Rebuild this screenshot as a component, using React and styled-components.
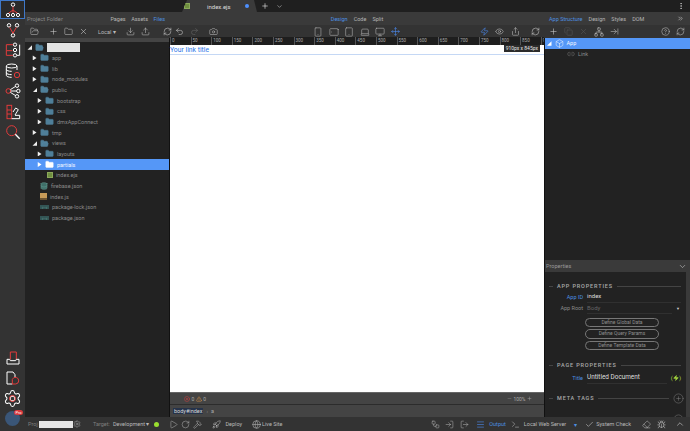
import styled, { createGlobalStyle } from "styled-components";
import {
  Plus, X, Upload, Download, RefreshCw, Undo2, Redo2, Camera, Smartphone, Tablet, Laptop,
  Monitor, Move, Zap, Eye, Share, Copy, Network, ArrowRightToLine, CircleHelp, ChevronDown,
  ChevronUp, ChevronsRight, EllipsisVertical, FolderOpen, Folder, Box, Link2, Settings,
  Play, RotateCw, Hammer, Rocket, Globe, Check, Eraser, Bug, Menu, Terminal, LogIn, LogOut,
  XCircle, TriangleAlert, CirclePlus, Minus, Workflow, Database,
} from "lucide-react";

const GlobalStyle = createGlobalStyle`
  html, body { margin: 0; padding: 0; background: #222; overflow: hidden; }
  * { box-sizing: border-box; }
`;

const rulerMarks = [0, 50, 100, 150, 200, 250, 300, 350, 400, 450, 500, 550, 600, 650, 700, 750, 800, 850, 900];

const treeItems = [
  { name: "app", depth: 1, arrow: "closed", icon: "folder" },
  { name: "lib", depth: 1, arrow: "closed", icon: "folder" },
  { name: "node_modules", depth: 1, arrow: "closed", icon: "folder" },
  { name: "public", depth: 1, arrow: "open", icon: "open" },
  { name: "bootstrap", depth: 2, arrow: "closed", icon: "folder" },
  { name: "css", depth: 2, arrow: "closed", icon: "folder" },
  { name: "dmxAppConnect", depth: 2, arrow: "closed", icon: "folder" },
  { name: "tmp", depth: 1, arrow: "closed", icon: "folder" },
  { name: "views", depth: 1, arrow: "open", icon: "open" },
  { name: "layouts", depth: 2, arrow: "closed", icon: "folder" },
  { name: "partials", depth: 2, arrow: "closed", icon: "folder", selected: true },
  { name: "index.ejs", depth: 2, icon: "ejs" },
  { name: "firebase.json", depth: 1, icon: "db" },
  { name: "index.js", depth: 1, icon: "js" },
  { name: "package-lock.json", depth: 1, icon: "json" },
  { name: "package.json", depth: 1, icon: "json" },
];

const App = () => {
  return (
    <>
      <GlobalStyle />
      <Shell>
        <Rail>
          <RailGroup>
            <RailItem $active>
              <RailIcon>
                <circle cx="12" cy="4" r="2.6" stroke="#fff" />
                <path d="M12 7v5M12 12L5 17M12 12v5M12 12l7 5" stroke="#e23b3b" />
                <circle cx="4.5" cy="19.5" r="2.4" stroke="#fff" />
                <circle cx="12" cy="19.5" r="2.4" stroke="#fff" />
                <circle cx="19.5" cy="19.5" r="2.4" stroke="#fff" />
              </RailIcon>
            </RailItem>
            <RailItem>
              <RailIcon>
                <circle cx="6" cy="5" r="2.6" stroke="#fff" />
                <circle cx="18" cy="5" r="2.6" stroke="#fff" />
                <circle cx="12" cy="20" r="2.6" stroke="#fff" />
                <path d="M7 8l5 9M17 8l-5 9" stroke="#e23b3b" />
              </RailIcon>
            </RailItem>
            <RailItem>
              <RailIcon>
                <circle cx="15" cy="4" r="2.5" stroke="#fff" />
                <circle cx="15" cy="12" r="2.5" stroke="#fff" />
                <circle cx="15" cy="20" r="2.5" stroke="#fff" />
                <path d="M22 4v16h-4" stroke="#fff" />
                <path d="M12 4H2v9h9M2 13v7h10" stroke="#e23b3b" />
              </RailIcon>
            </RailItem>
            <RailItem>
              <RailIcon>
                <ellipse cx="10" cy="4.5" rx="8" ry="3" stroke="#fff" />
                <path d="M2 4.5v14c0 1.8 3.5 3 8 3M18 4.5v6M2 9.5c0 1.8 3.5 3 8 3M2 14.5c0 1.8 3.5 3 8 3" stroke="#fff" />
                <circle cx="18" cy="18" r="4" stroke="#e23b3b" />
              </RailIcon>
            </RailItem>
            <RailItem>
              <RailIcon>
                <circle cx="5" cy="12" r="3.5" stroke="#e23b3b" />
                <circle cx="18" cy="4" r="2.6" stroke="#fff" />
                <circle cx="20" cy="12" r="2.6" stroke="#fff" />
                <circle cx="18" cy="20" r="2.6" stroke="#fff" />
                <path d="M8 10l8-5M8.5 12h9M8 14l8 5" stroke="#fff" />
              </RailIcon>
            </RailItem>
            <RailItem>
              <RailIcon>
                <rect x="3" y="2" width="7" height="20" stroke="#e23b3b" />
                <path d="M3 9h7M3 15h7" stroke="#e23b3b" />
                <path d="M12 12l4-6 4 2.5-5 8M10 22h12v-5h-7" stroke="#fff" />
              </RailIcon>
            </RailItem>
            <RailItem>
              <RailIcon>
                <circle cx="10" cy="10" r="7.5" stroke="#e23b3b" />
                <path d="M15.5 15.5L22 22" stroke="#fff" strokeWidth="2" />
              </RailIcon>
            </RailItem>
          </RailGroup>
          <RailGroup>
            <RailItem>
              <RailIcon>
                <path d="M8 14V3h9v11" stroke="#e23b3b" />
                <path d="M3 14v7h18v-7h-4l-1 2H8l-1-2z" stroke="#fff" />
              </RailIcon>
            </RailItem>
            <RailItem>
              <RailIcon>
                <path d="M3 21V3h9l3 4v4" stroke="#fff" />
                <path d="M3 21h8" stroke="#fff" />
                <path d="M11 14a5 5 0 1 1 5 7h-5z" stroke="#e23b3b" />
              </RailIcon>
            </RailItem>
            <RailItem>
              <SettingsWrap>
                <Settings size={19} color="#fff" strokeWidth={1.3} />
                <GearDot />
              </SettingsWrap>
            </RailItem>
          </RailGroup>
          <Avatar>
            <ProBadge>Pro</ProBadge>
          </Avatar>
        </Rail>

        <Main>
          <TabStrip>
            <FileTab>
              <EjsIcon />
              <TabName>index.ejs</TabName>
              <TabDot />
            </FileTab>
            <Plus size={8} color="#ddd" strokeWidth={2} />
            <ChevronDown size={7} color="#bbb" strokeWidth={2} />
            <TabSpacer />
            <EllipsisVertical size={8} color="#ccc" />
          </TabStrip>

          <HeaderStrip>
            <HeaderLeft>
              <PanelTitle>Project Folder</PanelTitle>
              <HeaderTabs>
                <HeaderTab>Pages</HeaderTab>
                <HeaderTab>Assets</HeaderTab>
                <HeaderTab $active>Files</HeaderTab>
              </HeaderTabs>
            </HeaderLeft>
            <HeaderCenter>
              <HeaderTab $active>Design</HeaderTab>
              <HeaderTab>Code</HeaderTab>
              <HeaderTab>Split</HeaderTab>
            </HeaderCenter>
            <HeaderRight>
              <HeaderTab $active>App Structure</HeaderTab>
              <HeaderTab>Design</HeaderTab>
              <HeaderTab>Styles</HeaderTab>
              <HeaderTab>DOM</HeaderTab>
              <TabSpacer />
              <ChevronsRight size={7} color="#ccc" />
            </HeaderRight>
          </HeaderStrip>

          <ToolStrip>
            <FileTools>
              <FolderOpen size={9} color="#bbb" strokeWidth={1.5} />
              <Plus size={9} color="#ccc" strokeWidth={1.5} />
              <Folder size={9} color="#bbb" strokeWidth={1.5} />
              <X size={9} color="#ccc" strokeWidth={1.5} />
              <LocalPicker>Local ▾</LocalPicker>
              <Download size={9} color="#bbb" strokeWidth={1.5} />
              <Upload size={9} color="#bbb" strokeWidth={1.5} />
            </FileTools>
            <HistoryTools>
              <RefreshCw size={9} color="#ccc" strokeWidth={1.5} />
              <Undo2 size={9} color="#ccc" strokeWidth={1.5} />
              <Redo2 size={9} color="#666" strokeWidth={1.5} />
              <Camera size={9} color="#bbb" strokeWidth={1.5} />
            </HistoryTools>
            <DeviceTools>
              <Smartphone size={10} color="#bbb" strokeWidth={1.3} />
              <Tablet size={10} color="#bbb" strokeWidth={1.3} style={{ transform: "rotate(90deg)" }} />
              <Tablet size={10} color="#bbb" strokeWidth={1.3} />
              <Laptop size={10} color="#bbb" strokeWidth={1.3} />
              <Monitor size={10} color="#bbb" strokeWidth={1.3} />
              <Move size={9} color="#4d90fe" strokeWidth={1.5} />
            </DeviceTools>
            <ViewTools>
              <Zap size={9} color="#4d90fe" strokeWidth={1.5} />
              <Eye size={9} color="#bbb" strokeWidth={1.5} />
              <Share size={9} color="#bbb" strokeWidth={1.5} />
              <RefreshCw size={9} color="#ccc" strokeWidth={1.5} />
            </ViewTools>
            <StructureTools>
              <Plus size={9} color="#ccc" strokeWidth={1.5} />
              <Copy size={9} color="#555" strokeWidth={1.5} />
              <X size={9} color="#555" strokeWidth={1.5} />
              <Network size={10} color="#bbb" strokeWidth={1.5} />
              <ArrowRightToLine size={9} color="#bbb" strokeWidth={1.5} />
              <TabSpacer />
              <CircleHelp size={9} color="#bbb" strokeWidth={1.5} />
              <RefreshCw size={9} color="#bbb" strokeWidth={1.5} />
            </StructureTools>
          </ToolStrip>

          <Workspace>
            <FilePanel>
              <PanelScroll />
              <TreeRow>
                <Arrow $kind="open" />
                <FolderOpen size={9} color="#5f8da8" fill="#4f7f99" strokeWidth={1} />
                <RedactedName />
              </TreeRow>
              {treeItems.map((item) => (
                <TreeRow key={item.name} $depth={item.depth} $selected={item.selected}>
                  <Arrow $kind={item.arrow} $selected={item.selected} />
                  <TreeIcon item={item} />
                  <TreeName $selected={item.selected}>{item.name}</TreeName>
                </TreeRow>
              ))}
            </FilePanel>

            <CanvasColumn>
              <Ruler>
                {rulerMarks.map((mark) => (
                  <RulerMark key={mark}>{mark}</RulerMark>
                ))}
              </Ruler>
              <Page>
                <PageLink>Your link title</PageLink>
                <SizeBadge>910px x 845px</SizeBadge>
              </Page>
              <StatusRow>
                <XCircle size={6} color="#d04040" strokeWidth={2} />
                <StatusCount>0</StatusCount>
                <TriangleAlert size={6} color="#d8934a" strokeWidth={2} />
                <StatusCount>0</StatusCount>
                <TabSpacer />
                <Minus size={5} color="#888" />
                <StatusCount>100%</StatusCount>
                <Plus size={5} color="#aaa" />
              </StatusRow>
              <CrumbRow>
                <Crumb>body#index</Crumb>
                <CrumbSep>›</CrumbSep>
                <CrumbPlain>a</CrumbPlain>
              </CrumbRow>
            </CanvasColumn>

            <SidePanel>
              <StructureTree>
                <StructureRow $selected>
                  <Arrow $kind="open" $selected />
                  <Box size={9} color="#fff" strokeWidth={1.3} />
                  <TreeName $selected>App</TreeName>
                </StructureRow>
                <StructureRow $child>
                  <Link2 size={8} color="#777" strokeWidth={1.5} />
                  <TreeName>Link</TreeName>
                </StructureRow>
              </StructureTree>
              <PropsHeader>
                <span>Properties</span>
                <ChevronDown size={9} color="#ccc" strokeWidth={1.5} />
              </PropsHeader>
              <PropsBody>
                <PropsContent>
                  <SectionTitle>APP PROPERTIES</SectionTitle>
                  <PropRow>
                    <PropLabel $blue>App ID</PropLabel>
                    <PropValue>index</PropValue>
                  </PropRow>
                  <PropRow>
                    <PropLabel>App Root</PropLabel>
                    <PropValue $muted>Body</PropValue>
                    <SelectCaret>▼</SelectCaret>
                  </PropRow>
                  <PillStack>
                    <Pill>Define Global Data</Pill>
                    <Pill>Define Query Params</Pill>
                    <Pill>Define Template Data</Pill>
                  </PillStack>
                  <SectionTitle $top={10}>PAGE PROPERTIES</SectionTitle>
                  <PropRow $top={2}>
                    <PropLabel $blue>Title</PropLabel>
                    <PropValue $large>Untitled Document</PropValue>
                    <BoltTag>
                      (<Zap size={6} color="#a5d63f" fill="#a5d63f" />)
                    </BoltTag>
                  </PropRow>
                  <SectionTitle $top={9.5} $plus>
                    META TAGS
                    <CirclePlus size={11} color="#888" strokeWidth={1} />
                  </SectionTitle>
                  <SectionTitle $top={11} $plus>
                    DYNAMIC ATTRIBUTES
                    <CirclePlus size={11} color="#888" strokeWidth={1} />
                  </SectionTitle>
                </PropsContent>
                <PropsScrollbar />
              </PropsBody>
            </SidePanel>
          </Workspace>

          <BottomBar>
            <ProjectSlot>
              <BarText>Proj</BarText>
              <RedactedProject />
              <Settings size={8} color="#aaa" strokeWidth={1.5} />
            </ProjectSlot>
            <TargetSlot>
              <BarText>Target:</BarText>
              <BarText $bright>Development ▾</BarText>
              <GreenDot />
              <Play size={9} color="#bbb" strokeWidth={1.3} />
              <RotateCw size={9} color="#bbb" strokeWidth={1.3} />
              <Hammer size={9} color="#bbb" strokeWidth={1.3} />
            </TargetSlot>
            <BarButton $gap={5}>
              <Rocket size={9} color="#ccc" strokeWidth={1.3} />
              <BarText $bright>Deploy</BarText>
            </BarButton>
            <BarButton $gap={1.5}>
              <Globe size={9} color="#ccc" strokeWidth={1.3} />
              <BarText $bright>Live Site</BarText>
            </BarButton>
            <TabSpacer />
            <BarIcons>
              <Workflow size={9} color="#bbb" strokeWidth={1.3} />
              <LogIn size={9} color="#bbb" strokeWidth={1.3} />
              <LogOut size={9} color="#bbb" strokeWidth={1.3} />
            </BarIcons>
            <OutputSlot>
              <Menu size={9} color="#4d90fe" strokeWidth={1.5} />
              <BarText $blue>Output</BarText>
            </OutputSlot>
            <ServerSlot>
              <Terminal size={9} color="#ccc" strokeWidth={1.3} />
              <BarText $bright>Local Web Server</BarText>
              <ServerCaret>▾</ServerCaret>
            </ServerSlot>
            <CheckSlot>
              <Check size={9} color="#ccc" strokeWidth={1.5} />
              <BarText $bright>System Check</BarText>
            </CheckSlot>
            <EndIcons>
              <Eraser size={9} color="#ccc" strokeWidth={1.3} />
              <Bug size={9} color="#ccc" strokeWidth={1.3} />
              <ChevronUp size={10} color="#ccc" strokeWidth={1.5} />
            </EndIcons>
          </BottomBar>
        </Main>
      </Shell>
    </>
  );
};

// small file type icons in the tree
const TreeIcon = ({ item }) => {
  if (item.icon === "folder") {
    const color = item.selected ? "#fff" : "#4f7f99";
    return <Folder size={9} color={color} fill={color} strokeWidth={1} />;
  }
  if (item.icon === "open") {
    return <FolderOpen size={9} color="#5f8da8" fill="#4f7f99" strokeWidth={1} />;
  }
  if (item.icon === "ejs") return <EjsIcon />;
  if (item.icon === "db") return <Database size={8} color="#6aa59a" fill="#3f6f68" strokeWidth={1.5} />;
  if (item.icon === "js") return <JsIcon />;
  return <JsonIcon>‹··›</JsonIcon>;
};

export default App;

const font = `font-family: Roboto, "Liberation Sans", sans-serif;`;

const Shell = styled.div`
  ${font}
  width: 690px;
  height: 431px;
  display: flex;
  overflow: hidden;
  background: #222;
`;

const Rail = styled.div`
  width: 25px;
  height: 431px;
  flex: none;
  background: #333;
  display: flex;
  flex-direction: column;
  justify-content: space-between;
`;

const RailGroup = styled.div`
  display: flex;
  flex-direction: column;
  gap: 1px;

  &:nth-child(2) {
    margin-top: auto;
    margin-bottom: 3px;
  }
`;

const RailItem = styled.div`
  height: 19.4px;
  display: flex;
  align-items: center;
  justify-content: center;
  border: 1px solid ${(p) => (p.$active ? "#3f78c8" : "transparent")};
  background: ${(p) => (p.$active ? "#2a2a2a" : "transparent")};
`;

const RailIcon = styled.svg.attrs({ viewBox: "0 0 24 24", fill: "none", strokeWidth: 1.5 })`
  width: 16px;
  height: 16px;
`;

const SettingsWrap = styled.div`
  position: relative;
  display: flex;
`;

const GearDot = styled.div`
  position: absolute;
  left: 6px;
  top: 6px;
  width: 7px;
  height: 7px;
  border-radius: 50%;
  border: 1px solid #e23b3b;
`;

const Avatar = styled.div`
  position: relative;
  width: 15px;
  height: 15px;
  margin: 0 0 5px 5px;
  border-radius: 50%;
  background: #3a5678;
`;

const ProBadge = styled.div`
  position: absolute;
  right: -3px;
  top: -1px;
  padding: 0 1.5px;
  border-radius: 3px;
  background: #d8383d;
  color: #fff;
  font-size: 4px;
  line-height: 5px;
`;

const Main = styled.div`
  width: 665px;
  height: 431px;
  display: flex;
  flex-direction: column;
`;

const TabStrip = styled.div`
  height: 12px;
  flex: none;
  background: #1f1f1f;
  display: flex;
  align-items: center;
  gap: 7px;
  padding: 0 5px 0 157px;
`;

const FileTab = styled.div`
  width: 75px;
  height: 12px;
  margin-right: -3px;
  padding: 0 8px 0 0;
  display: flex;
  align-items: center;
  background: #3a3a3a;
  clip-path: polygon(5px 0, calc(100% - 3px) 0, 100% 100%, 0 100%);
`;

const EjsIcon = styled.div`
  width: 6px;
  height: 6px;
  margin-left: 2px;
  flex: none;
  background: #6f8f3f;
  border: 1px solid #8aa85a;
`;

const TabName = styled.span`
  margin-left: 17px;
  font-size: 6px;
  color: #ddd;
`;

const TabDot = styled.div`
  margin-left: auto;
  width: 4px;
  height: 4px;
  border-radius: 50%;
  background: #4d90fe;
`;

const TabSpacer = styled.div`
  flex: 1;
`;

const HeaderStrip = styled.div`
  height: 13px;
  flex: none;
  background: #3a3a3a;
  display: grid;
  grid-template-columns: 145px 374px 146px;
  align-items: center;
`;

const HeaderLeft = styled.div`
  display: flex;
  align-items: center;
  justify-content: space-between;
  padding: 0 5px 0 2px;
`;

const PanelTitle = styled.span`
  font-size: 5.8px;
  color: #888;
`;

const HeaderTabs = styled.div`
  display: flex;
  gap: 5.5px;
`;

const HeaderTab = styled.span`
  font-size: 5.5px;
  color: ${(p) => (p.$active ? "#4d90e0" : "#b5b5b5")};
`;

const HeaderCenter = styled.div`
  display: flex;
  justify-content: center;
  gap: 6px;
`;

const HeaderRight = styled.div`
  display: flex;
  align-items: center;
  gap: 6px;
  padding: 0 6px 0 5px;
`;

const ToolStrip = styled.div`
  height: 13px;
  flex: none;
  background: #333;
  display: flex;
  align-items: center;
`;

const FileTools = styled.div`
  width: 137.5px;
  flex: none;
  display: flex;
  align-items: center;
  gap: 6px;
  padding-left: 4.5px;

  > :first-child {
    margin-right: 4px;
  }
`;

const LocalPicker = styled.span`
  margin: 0 4.5px;
  font-size: 5.5px;
  color: #bbb;
  white-space: nowrap;
`;

const HistoryTools = styled.div`
  width: 150.5px;
  flex: none;
  display: flex;
  align-items: center;
  gap: 6px;

  > :first-child {
    margin-right: -3px;
  }
  > :last-child {
    margin-left: 4px;
  }
`;

const DeviceTools = styled.div`
  width: 166.5px;
  flex: none;
  display: flex;
  align-items: center;
  gap: 5.5px;
`;

const ViewTools = styled.div`
  width: 69px;
  flex: none;
  display: flex;
  align-items: center;
  gap: 6.5px;

  > :last-child {
    margin-left: 4.5px;
  }
`;

const StructureTools = styled.div`
  flex: 1;
  display: flex;
  align-items: center;
  gap: 6px;
  padding-right: 5.5px;
`;

const Workspace = styled.div`
  flex: 1;
  min-height: 0;
  display: grid;
  grid-template-columns: 145px 374px 146px;
`;

const FilePanel = styled.div`
  background: #222;
  overflow: hidden;
  border-right: 1px solid #111;
`;

const PanelScroll = styled.div`
  height: 4px;
  background: #444;
`;

const TreeRow = styled.div`
  height: 10.67px;
  display: flex;
  align-items: center;
  gap: 3px;
  padding-left: ${(p) => 2 + (p.$depth || 0) * 5}px;
  background: ${(p) => (p.$selected ? "#5597f7" : "transparent")};
`;

const Arrow = styled.div`
  width: 5px;
  height: 5px;
  flex: none;
  ${(p) => !p.$kind && "visibility: hidden;"}
  background: ${(p) => (p.$selected ? "#fff" : "#eee")};
  clip-path: ${(p) =>
    p.$kind === "open"
      ? "polygon(100% 10%, 100% 100%, 10% 100%)"
      : "polygon(15% 0, 90% 50%, 15% 100%)"};
`;

const TreeName = styled.span`
  font-size: 5.5px;
  white-space: nowrap;
  color: ${(p) => (p.$selected ? "#f2f6ff" : "#8a8a8a")};
`;

const RedactedName = styled.div`
  width: 33px;
  height: 9px;
  background: #e4e4e4;
`;

const JsIcon = styled.div`
  width: 7px;
  height: 7px;
  background: #c79a58;
  border-bottom: 2px solid #6b5230;
`;

const JsonIcon = styled.span`
  width: 9px;
  font-size: 5px;
  color: #6aa59a;
  background: #355;
  line-height: 4px;
  text-align: center;
`;

const CanvasColumn = styled.div`
  display: flex;
  flex-direction: column;
  min-height: 0;
`;

const Ruler = styled.div`
  height: 8px;
  flex: none;
  margin-top: -1px;
  background: #1e1e1e;
  display: flex;
  overflow: hidden;
`;

const RulerMark = styled.span`
  width: 20.6px;
  flex: none;
  padding-left: 1px;
  border-left: 1px solid #555;
  font-size: 4.5px;
  line-height: 8px;
  color: #aaa;
`;

const Page = styled.div`
  position: relative;
  flex: 1;
  background: #fff;
`;

const PageLink = styled.div`
  height: 10px;
  font-size: 6.8px;
  line-height: 10px;
  color: #2a75e8;
  border-bottom: 1px solid #c5d8f5;
`;

const SizeBadge = styled.div`
  position: absolute;
  right: 4px;
  top: 0;
  padding: 0 2px;
  background: #2b2b2b;
  color: #e4e4e4;
  font-size: 5px;
  line-height: 7px;
`;

const StatusRow = styled.div`
  height: 12px;
  flex: none;
  display: flex;
  align-items: center;
  gap: 1.5px;
  padding: 0 12px 0 14px;
  background: #444;
  border-top: 1px solid #666;
`;

const StatusCount = styled.span`
  font-size: 5px;
  color: #aaa;
`;

const CrumbRow = styled.div`
  height: 13px;
  flex: none;
  display: flex;
  align-items: center;
  gap: 3px;
  padding-left: 3px;
  background: #444;
  border-top: 1px solid #2c2c2c;
`;

const Crumb = styled.span`
  padding: 0 1px;
  background: #26334a;
  color: #d8d8d8;
  font-size: 5.5px;
`;

const CrumbSep = styled.span`
  font-size: 5px;
  color: #888;
`;

const CrumbPlain = styled.span`
  font-size: 5.5px;
  color: #aaa;
`;

const SidePanel = styled.div`
  display: flex;
  flex-direction: column;
  min-height: 0;
  background: #222;
  border-left: 1px solid #111;
`;

const StructureTree = styled.div`
  flex: 1;
`;

const StructureRow = styled.div`
  height: 10.5px;
  display: flex;
  align-items: center;
  gap: 3px;
  padding-left: ${(p) => (p.$child ? 22 : 1.5)}px;
  background: ${(p) => (p.$selected ? "#5597f7" : "transparent")};
`;

const PropsHeader = styled.div`
  height: 12px;
  flex: none;
  display: flex;
  align-items: center;
  justify-content: space-between;
  padding: 0 3px 0 1px;
  background: #3a3a3a;
  font-size: 5.5px;
  color: #999;
`;

const PropsBody = styled.div`
  height: 145px;
  flex: none;
  display: flex;
  overflow: hidden;
`;

const PropsContent = styled.div`
  flex: 1;
  padding: 9px 5px 0 4px;
`;

const PropsScrollbar = styled.div`
  width: 4px;
  background: #3a3a3a;
`;

const SectionTitle = styled.div`
  height: 10px;
  margin-top: ${(p) => p.$top || 0}px;
  display: flex;
  align-items: center;
  gap: 4px;
  font-size: 5.5px;
  font-weight: 500;
  letter-spacing: 0.85px;
  color: #aaa;
  white-space: nowrap;

  &::before {
    content: "";
    width: 4px;
    height: 1px;
    background: #444;
  }
  &::after {
    content: "";
    flex: 1;
    order: ${(p) => (p.$plus ? 0 : 1)};
    height: 1px;
    background: #444;
  }
  svg {
    order: 2;
    margin-right: -3px;
    flex: none;
  }
`;

const PropRow = styled.div`
  height: 11.5px;
  margin-top: ${(p) => p.$top || 0}px;
  display: flex;
  align-items: center;
  gap: 4px;
`;

const PropLabel = styled.span`
  width: 34px;
  flex: none;
  text-align: right;
  font-size: 5.5px;
  color: ${(p) => (p.$blue ? "#4d90e0" : "#8a8a8a")};
`;

const PropValue = styled.span`
  flex: 1;
  font-size: ${(p) => (p.$large ? 6.4 : 6)}px;
  line-height: 10.5px;
  border-bottom: 1px solid #303030;
  color: ${(p) => (p.$muted ? "#666" : "#ddd")};
`;

const SelectCaret = styled.span`
  font-size: 4px;
  color: #ccc;
  margin-right: 1px;
`;

const BoltTag = styled.span`
  display: flex;
  align-items: center;
  font-size: 6px;
  color: #a5d63f;
`;

const PillStack = styled.div`
  display: flex;
  flex-direction: column;
  gap: 2px;
  margin: 3.5px 0 0 36px;
`;

const Pill = styled.div`
  width: 74px;
  height: 9.5px;
  border: 1px solid #777;
  border-radius: 5px;
  text-align: center;
  font-size: 5px;
  line-height: 7.5px;
  color: #8f8f8f;
`;

const BottomBar = styled.div`
  height: 14px;
  flex: none;
  display: flex;
  align-items: center;
  background: #333;
  position: relative;
  z-index: 1;
`;

const BarText = styled.span`
  font-size: 5.5px;
  white-space: nowrap;
  color: ${(p) => (p.$blue ? "#4d90e0" : p.$bright ? "#b8b8b8" : "#7f7f7f")};
`;

const ProjectSlot = styled.div`
  width: 68px;
  flex: none;
  display: flex;
  align-items: center;
  padding-left: 3px;
`;

const RedactedProject = styled.div`
  width: 34px;
  height: 7px;
  margin-left: 1px;
  background: #e6e6e6;
`;

const TargetSlot = styled.div`
  width: 118.5px;
  flex: none;
  display: flex;
  align-items: center;
  gap: 3px;
`;

const GreenDot = styled.div`
  width: 5px;
  height: 5px;
  margin: 0 7px 0 2px;
  border-radius: 50%;
  background: #9adf2f;
`;

const BarButton = styled.div`
  width: 40px;
  flex: none;
  display: flex;
  align-items: center;
  gap: ${(p) => p.$gap}px;
`;

const BarIcons = styled.div`
  display: flex;
  gap: 5.5px;
  margin-right: 7px;
`;

const OutputSlot = styled.div`
  display: flex;
  align-items: center;
  gap: 4.5px;
  margin-right: 5.5px;
`;

const ServerSlot = styled.div`
  display: flex;
  align-items: center;
  gap: 3.5px;
  margin-right: 8px;
`;

const ServerCaret = styled.span`
  margin-left: 4px;
  font-size: 6px;
  color: #4d90e0;
`;

const CheckSlot = styled.div`
  display: flex;
  align-items: center;
  gap: 2.5px;
  margin-right: 10.5px;
`;

const EndIcons = styled.div`
  display: flex;
  align-items: center;
  gap: 6px;
  padding-right: 5px;

  > :last-child {
    margin-left: 3.5px;
  }
`;
